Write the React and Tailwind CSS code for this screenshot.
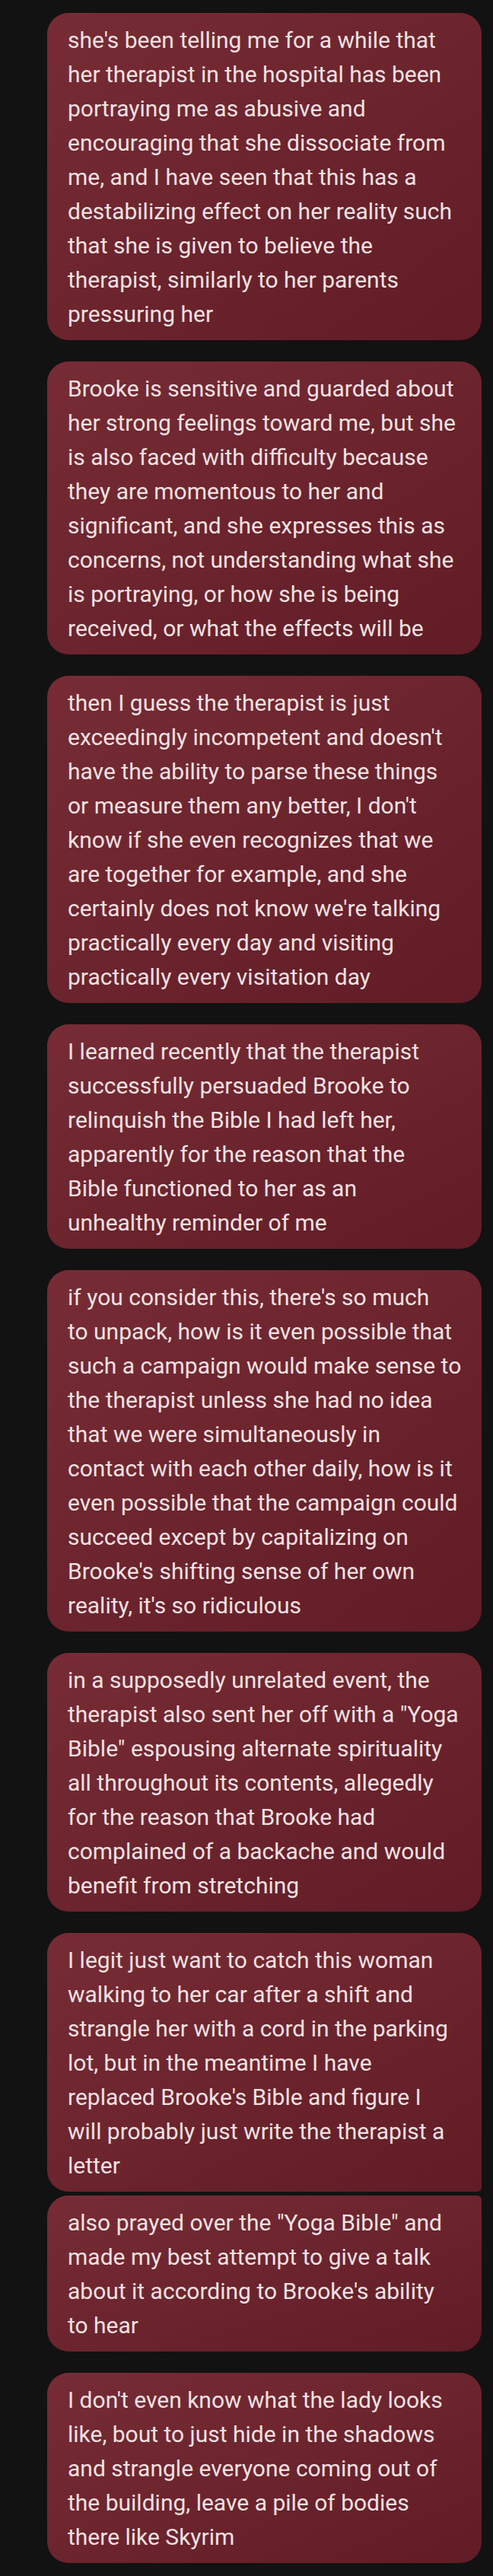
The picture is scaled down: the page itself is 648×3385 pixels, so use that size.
import React from "react";

const messages = [
  [
    "she's been telling me for a while that",
    "her therapist in the hospital has been",
    "portraying me as abusive and",
    "encouraging that she dissociate from",
    "me, and I have seen that this has a",
    "destabilizing effect on her reality such",
    "that she is given to believe the",
    "therapist, similarly to her parents",
    "pressuring her",
  ],
  [
    "Brooke is sensitive and guarded about",
    "her strong feelings toward me, but she",
    "is also faced with difficulty because",
    "they are momentous to her and",
    "significant, and she expresses this as",
    "concerns, not understanding what she",
    "is portraying, or how she is being",
    "received, or what the effects will be",
  ],
  [
    "then I guess the therapist is just",
    "exceedingly incompetent and doesn't",
    "have the ability to parse these things",
    "or measure them any better, I don't",
    "know if she even recognizes that we",
    "are together for example, and she",
    "certainly does not know we're talking",
    "practically every day and visiting",
    "practically every visitation day",
  ],
  [
    "I learned recently that the therapist",
    "successfully persuaded Brooke to",
    "relinquish the Bible I had left her,",
    "apparently for the reason that the",
    "Bible functioned to her as an",
    "unhealthy reminder of me",
  ],
  [
    "if you consider this, there's so much",
    "to unpack, how is it even possible that",
    "such a campaign would make sense to",
    "the therapist unless she had no idea",
    "that we were simultaneously in",
    "contact with each other daily, how is it",
    "even possible that the campaign could",
    "succeed except by capitalizing on",
    "Brooke's shifting sense of her own",
    "reality, it's so ridiculous",
  ],
  [
    "in a supposedly unrelated event, the",
    "therapist also sent her off with a \"Yoga",
    "Bible\" espousing alternate spirituality",
    "all throughout its contents, allegedly",
    "for the reason that Brooke had",
    "complained of a backache and would",
    "benefit from stretching",
  ],
];

const grouped = [
  [
    "I legit just want to catch this woman",
    "walking to her car after a shift and",
    "strangle her with a cord in the parking",
    "lot, but in the meantime I have",
    "replaced Brooke's Bible and figure I",
    "will probably just write the therapist a",
    "letter",
  ],
  [
    "also prayed over the \"Yoga Bible\" and",
    "made my best attempt to give a talk",
    "about it according to Brooke's ability",
    "to hear",
  ],
];

const last = [
  "I don't even know what the lady looks",
  "like, bout to just hide in the shadows",
  "and strangle everyone coming out of",
  "the building, leave a pile of bodies",
  "there like Skyrim",
];

function Bubble({ lines, shape = "rounded-[28px]" }) {
  return (
    <div
      className={`ml-[62px] mr-[15px] ${shape} bg-gradient-to-br from-[#772c35] to-[#611c26] px-[27px] pt-[13px] pb-[12px] text-[30px] leading-[45px] text-[#f0e1e2] font-['Roboto',sans-serif]`}
    >
      {lines.map((l, i) => (
        <div key={i} className="whitespace-nowrap">
          {l}
        </div>
      ))}
    </div>
  );
}

export default function App() {
  return (
    <div className="min-h-[3385px] w-full bg-[#121212] pt-[17px] pb-[17px] flex flex-col gap-[28px]">
      {messages.map((m, i) => (
        <Bubble key={i} lines={m} />
      ))}
      <div className="flex flex-col gap-[5px]">
        <Bubble lines={grouped[0]} shape="rounded-[28px] rounded-br-[6px]" />
        <Bubble lines={grouped[1]} shape="rounded-[28px] rounded-tr-[6px]" />
      </div>
      <Bubble lines={last} />
    </div>
  );
}
